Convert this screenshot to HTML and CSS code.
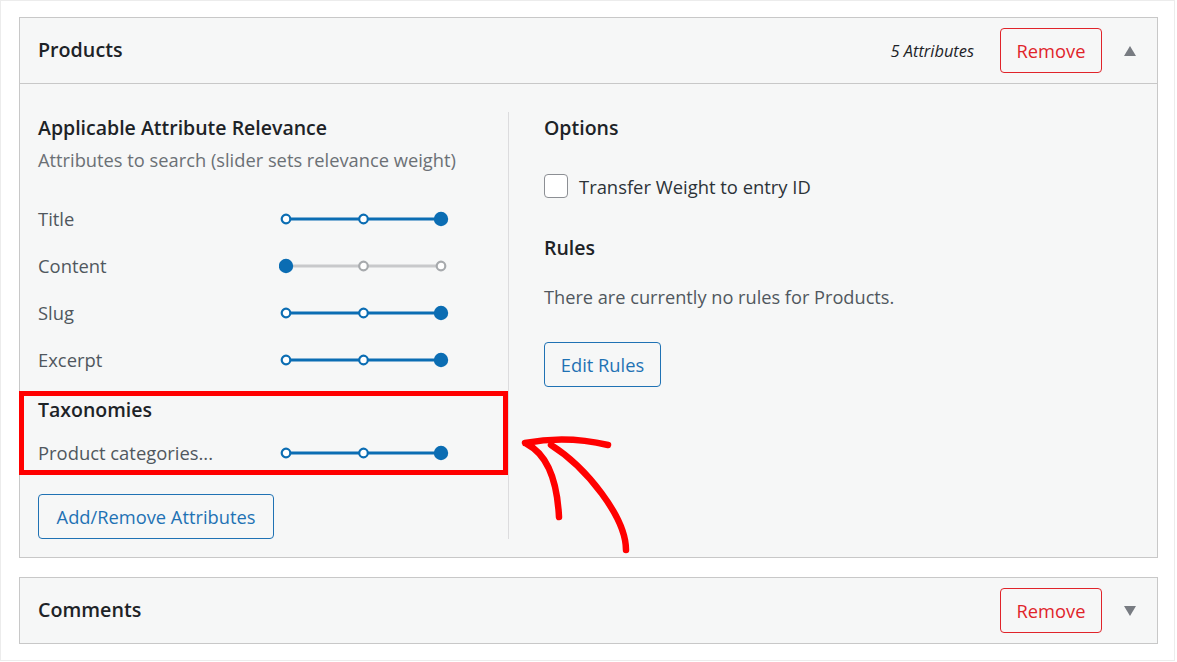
FILE: index.html
```html
<!DOCTYPE html>
<html lang="en">
<head>
<meta charset="utf-8">
<title>Products attributes</title>
<link rel="stylesheet" href="styles.css">
</head>
<body>
<div class="page">
  <section class="card">
    <header class="card-head">
      <h2 class="card-title">Products</h2>
      <span class="attr-count">5 Attributes</span>
      <button class="btn btn-remove" type="button">Remove</button>
      <span class="toggle toggle-up"></span>
    </header>
    <div class="card-body">
      <div class="col-left">
        <h3 class="sec-title">Applicable Attribute Relevance</h3>
        <p class="sec-desc">Attributes to search (slider sets relevance weight)</p>
        <ul class="attr-list">
          <li class="attr-row"><span class="attr-label">Title</span>
            <svg class="slider" viewBox="0 0 170 16" width="170" height="16"><line x1="7" y1="8" x2="162" y2="8" class="trk-on"/><circle cx="7" cy="8" r="4.3" class="dot-on"/><circle cx="84.5" cy="8" r="4.3" class="dot-on"/><circle cx="162" cy="8" r="7.2" class="knob"/></svg></li>
          <li class="attr-row"><span class="attr-label">Content</span>
            <svg class="slider" viewBox="0 0 170 16" width="170" height="16"><line x1="7" y1="8" x2="162" y2="8" class="trk-off"/><circle cx="84.5" cy="8" r="4.3" class="dot-off"/><circle cx="162" cy="8" r="4.3" class="dot-off"/><circle cx="7" cy="8" r="7.2" class="knob"/></svg></li>
          <li class="attr-row"><span class="attr-label">Slug</span>
            <svg class="slider" viewBox="0 0 170 16" width="170" height="16"><line x1="7" y1="8" x2="162" y2="8" class="trk-on"/><circle cx="7" cy="8" r="4.3" class="dot-on"/><circle cx="84.5" cy="8" r="4.3" class="dot-on"/><circle cx="162" cy="8" r="7.2" class="knob"/></svg></li>
          <li class="attr-row"><span class="attr-label">Excerpt</span>
            <svg class="slider" viewBox="0 0 170 16" width="170" height="16"><line x1="7" y1="8" x2="162" y2="8" class="trk-on"/><circle cx="7" cy="8" r="4.3" class="dot-on"/><circle cx="84.5" cy="8" r="4.3" class="dot-on"/><circle cx="162" cy="8" r="7.2" class="knob"/></svg></li>
        </ul>
        <div class="tax-group">
          <h3 class="sec-title tax-title">Taxonomies</h3>
          <div class="attr-row"><span class="attr-label">Product categories...</span>
            <svg class="slider" viewBox="0 0 170 16" width="170" height="16"><line x1="7" y1="8" x2="162" y2="8" class="trk-on"/><circle cx="7" cy="8" r="4.3" class="dot-on"/><circle cx="84.5" cy="8" r="4.3" class="dot-on"/><circle cx="162" cy="8" r="7.2" class="knob"/></svg></div>
          <span class="highlight"></span>
        </div>
        <button class="btn btn-blue btn-attrs" type="button">Add/Remove Attributes</button>
      </div>
      <div class="col-right">
        <h3 class="sec-title">Options</h3>
        <label class="check-row"><span class="checkbox"></span><span class="check-label">Transfer Weight to entry ID</span></label>
        <h3 class="sec-title rules-title">Rules</h3>
        <p class="rules-text">There are currently no rules for Products.</p>
        <button class="btn btn-blue btn-rules" type="button">Edit Rules</button>
      </div>
      <svg class="arrow" viewBox="0 0 160 140" width="160" height="140">
        <path d="M24 21 Q 65 13 107 23" />
        <path d="M26 22 C 45 32, 56 55, 58 95" />
        <path d="M50 23 C 85 45, 125 95, 125 128" />
      </svg>
    </div>
  </section>

  <section class="card card-collapsed">
    <header class="card-head">
      <h2 class="card-title">Comments</h2>
      <button class="btn btn-remove" type="button">Remove</button>
      <span class="toggle toggle-down"></span>
    </header>
  </section>
</div>
</body>
</html>
```

FILE: styles.css
```css
* { box-sizing: border-box; }

html, body {
  margin: 0;
  padding: 0;
  background: #ffffff;
}

body {
  font-family: "Open Sans", "Noto Sans", "Liberation Sans", sans-serif;
  color: #1d2327;
}

.page {
  position: relative;
  width: 1175px;
  height: 661px;
  border: 1px solid #ececec;
  padding: 16px 16px 0 18px;
}

.card {
  position: relative;
  background: #f6f7f7;
  border: 1px solid #c8c8c8;
}

.card-collapsed {
  margin-top: 19px;
}

.card-head {
  display: flex;
  align-items: center;
  height: 65px;
  padding: 0 21px 0 18px;
}

.card > .card-head + .card-body {
  border-top: 1px solid #c8c8c8;
}

.card-title {
  margin: 0;
  flex: 1;
  font-size: 19.7px;
  font-weight: 600;
  line-height: 28px;
  margin-top: -2px;
  color: #1d2327;
}

.attr-count {
  font-size: 16.4px;
  font-style: italic;
  color: #1d2327;
  margin-right: 26px;
}

.btn {
  font-family: inherit;
  background: #f6f7f7;
  border-radius: 4px;
  font-size: 18.3px;
  cursor: pointer;
  padding: 0;
}

.btn-remove {
  width: 102px;
  height: 45px;
  border: 1px solid #e0242a;
  color: #e0242a;
}

.toggle {
  width: 0;
  height: 0;
  margin-left: 22px;
  border-left: 6px solid transparent;
  border-right: 6px solid transparent;
}

.toggle-up { border-bottom: 10px solid #787c82; }
.toggle-down { border-top: 10px solid #787c82; }

.card-body {
  position: relative;
  display: flex;
  padding: 28px 18px 18px 18px;
}

.col-left {
  width: 471px;
  border-right: 1px solid #dcdcde;
}

.col-right {
  flex: 1;
  padding-left: 35px;
}

.sec-title {
  margin: 0;
  font-size: 19.5px;
  font-weight: 600;
  line-height: 32px;
  color: #1d2327;
}

.sec-desc {
  margin: 0;
  font-size: 18.3px;
  line-height: 32px;
  color: #6b7075;
}

.attr-list {
  list-style: none;
  margin: 19px 0 0;
  padding: 0;
}

.attr-row {
  display: flex;
  align-items: center;
  height: 47px;
}

.attr-label {
  width: 241px;
  font-size: 18.4px;
  color: #50575e;
}

.slider { display: block; }

.trk-on { stroke: #0b6db3; stroke-width: 3; }
.trk-off { stroke: #c8c9cb; stroke-width: 3; }
.dot-on { fill: #ffffff; stroke: #0b6db3; stroke-width: 2.2; }
.dot-off { fill: #ffffff; stroke: #a7aaad; stroke-width: 2.2; }
.knob { fill: #0b6db3; }

.tax-group {
  position: relative;
  margin-top: 11px;
}

.tax-title { margin-bottom: 3px; }

.highlight {
  position: absolute;
  left: -19px;
  top: -3px;
  width: 489px;
  height: 84px;
  border: 5px solid #ff0000;
}

.btn-blue {
  height: 45px;
  border: 1px solid #1f72b4;
  color: #1f72b4;
}

.btn-attrs {
  display: block;
  width: 236px;
  margin-top: 18px;
}

.check-row {
  display: flex;
  align-items: center;
  height: 48px;
  margin-top: 18px;
}

.checkbox {
  width: 24px;
  height: 24px;
  border: 1px solid #8c8f94;
  border-radius: 4px;
  background: #ffffff;
  margin-right: 11px;
}

.check-label {
  font-size: 18.4px;
  color: #2c3338;
}

.rules-title { margin-top: 22px; }

.rules-text {
  margin: 17px 0 0;
  font-size: 18.2px;
  line-height: 32px;
  color: #50575e;
}

.btn-rules {
  display: block;
  width: 117px;
  margin-top: 29px;
}

.arrow {
  position: absolute;
  left: 481px;
  top: 338px;
  fill: none;
  stroke: #ff0000;
  stroke-width: 6.5;
  stroke-linecap: round;
  stroke-linejoin: round;
}
```
